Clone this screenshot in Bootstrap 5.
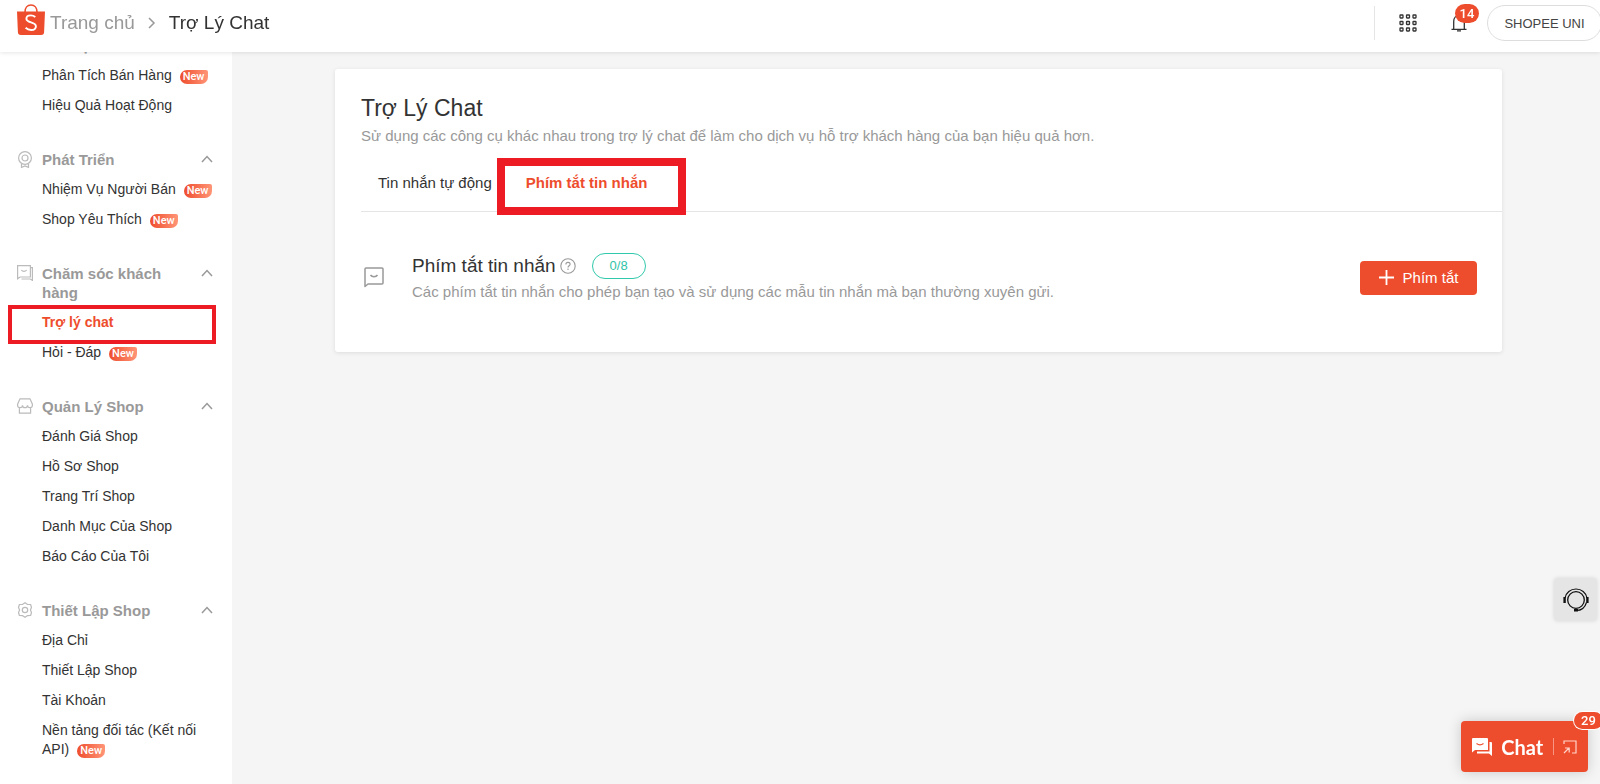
<!DOCTYPE html>
<html lang="vi">
<head>
<meta charset="utf-8">
<meta name="viewport" content="width=device-width, initial-scale=1">
<title>Trợ Lý Chat</title>
<link href="https://cdn.jsdelivr.net/npm/bootstrap@5.3.0/dist/css/bootstrap.min.css" rel="stylesheet">
<style>
:root { --brand: #ee4d2d; --mark-red: #ed1c24; --ink: #333; --soft: #999; }
body { font-family: "Liberation Sans", Arial, sans-serif; font-size: 14px; line-height: 19px; color: var(--ink); background: #f5f5f5; overflow-x: hidden; }
a { color: inherit; text-decoration: none; }
svg { display: block; flex: none; fill: none; }

.topbar { height: 52px; padding: 0 0 6px 17px; background: #fff; box-shadow: 0 1px 4px rgba(0,0,0,.1); }
.crumbs { font-size: 19px; line-height: 24px; }
.crumbs .home { color: var(--soft); }
.crumbs .logo { margin: -8px 5px 0 0; }
.crumbs .sep { margin: 0 13px; }
.tools { height: 36px; }
.tools .rule { width: 1px; height: 34px; background: #e5e5e5; margin-right: 24px; }
.tools .apps { margin-right: 6px; }
.plain { border: 0; padding: 0; background: none; color: var(--ink); }
.count { background: var(--brand); color: #fff; border-radius: 10px; font: 500 13px/19px Roboto, sans-serif; text-align: center; position: absolute; }
.bell .count { left: 4px; top: -10px; width: 24px; }
.account { height: 36px; width: 115px; border: 1px solid #ddd; border-radius: 18px; background: #fff; font-size: 13px; color: #444; margin-right: -2px; padding: 0; }

.side { width: 232px; min-height: 100vh; padding: 36px 16px 0 17px; background: #fff; flex: none; }
.group { margin-bottom: 35px; }
.group-head { font-size: 15px; font-weight: 700; color: var(--soft); gap: 9px; width: 100%; text-align: left; }
.group-head svg { margin-top: 1px; stroke: #bbb; }
.group-head .caret { stroke: #999; margin: 3px 3px 0 0; }
.group ul { padding-left: 25px; margin: 0; }
.group li { margin-top: 11px; position: relative; }
.new { display: inline-block; width: 28px; height: 14px; margin-left: 4px; border-radius: 7px 2px 7px 7px; background: linear-gradient(90deg, #ee4d2d, #ff9577); color: #fff; font: 500 11px/14px Roboto, sans-serif; text-align: center; vertical-align: 0; }
.active-text { color: var(--brand); font-weight: 700; }
.frame { position: absolute; pointer-events: none; border: solid var(--mark-red); }
.frame-side { border-width: 4px; inset: -8px 0 -12px -34px; }
.frame-tab { border-width: 8px; inset: -3px -22px -4px -12px; }

main { padding: 69px 98px 40px 103px; min-width: 0; }
.panel { background: #fff; border-radius: 3px; box-shadow: 0 1px 4px rgba(0,0,0,.1); padding: 25px 0 50px 26px; }
h1 { font-size: 23px; line-height: 28px; font-weight: 400; margin: 0; }
h2 { font-size: 19px; line-height: 24px; font-weight: 400; margin: 0; }
.desc { color: var(--soft); font-size: 15px; line-height: 20px; margin: 0; }
.tabs { border-bottom: 1px solid #e5e5e5; margin-top: 15px; font-size: 15px; line-height: 20px; }
.tabs a { display: block; padding: 12px 17px 18px; }
.tool-row { padding: 41px 25px 0 3px; }
.tool-row .desc { margin-top: 3px; }
.quota { border: 1px solid #30c9ab; color: #2fc3a8; border-radius: 13px; font-size: 13px; line-height: 24px; width: 54px; text-align: center; }
.add { background: var(--brand); color: #fff; border: 0; border-radius: 4px; height: 34px; width: 117px; font-size: 15px; padding: 0; gap: 9px; }

.support { position: fixed; right: 3px; bottom: 163px; width: 43px; height: 43px; border: 0; border-radius: 4px; background: #e5e5e5; box-shadow: 0 0 4px rgba(0,0,0,.12); padding: 0; }
.chat { position: fixed; right: 12px; bottom: 12px; width: 127px; height: 51px; border: 0; border-radius: 4px; background: var(--brand); color: #fff; box-shadow: 0 0 14px rgba(0,0,0,.18); font: 700 20px/24px Lato, sans-serif; padding: 0 11px; }
.chat .bar { width: 1px; height: 17px; background: #f79683; }
.chat .count { right: -15px; top: -9px; width: 29px; line-height: 17px; box-shadow: 0 0 0 1px #fff; }
</style>
</head>
<body>
<header class="topbar fixed-top d-flex align-items-center justify-content-between">
  <nav class="crumbs d-flex align-items-center" aria-label="breadcrumb">
    <a href="#" class="logo" aria-label="Shopee"><svg width="28" height="31" viewBox="0 0 28 31">
      <path d="M8 8c0-4 2.300-7 6-7s6 3 6 7" stroke="#ee4d2d" stroke-width="1.600"/>
      <path d="M0 7.500h28l-.900 20.500a3 3 0 0 1-3 3H3.900a3 3 0 0 1-3-3z" fill="#ee4d2d"/>
      <path d="M18.300 13.100c-1.300-1.100-2.700-1.700-4.500-1.700-2.600 0-4.400 1.300-4.400 3.300 0 4.600 9.500 2.600 9.500 7.500 0 2.300-2 3.800-4.800 3.800-2.200 0-4-.8-5.500-2.200" stroke="#fff" stroke-width="1.900"/></svg></a>
    <a href="#" class="home">Trang chủ</a>
    <svg class="sep" width="8" height="12" viewBox="0 0 8 12"><path d="M1 1l5 5-5 5" stroke="#999" stroke-width="1.500"/></svg>
    <span>Trợ Lý Chat</span>
  </nav>
  <div class="tools d-flex align-items-center">
    <span class="rule"></span>
    <button class="plain apps" aria-label="Ứng dụng"><svg width="18" height="18" viewBox="0 0 18 18" stroke="#333" stroke-width="1.300"><g id="gr"><rect x="1" y="1" width="3" height="3" rx=".5"/><rect x="7.500" y="1" width="3" height="3" rx=".5"/><rect x="14" y="1" width="3" height="3" rx=".5"/></g><use href="#gr" y="6.500"/><use href="#gr" y="13"/></svg></button>
    <button class="plain bell position-relative ms-4 me-3" aria-label="Thông báo"><svg class="ms-1" width="16" height="18" viewBox="0 0 16 18" stroke="#333" stroke-width="1.300"><path d="M.5 15.300h15M2.700 15V7.500C2.700 4 5 1.500 8 1.500s5.300 2.500 5.300 6V15M6 16.800h4"/></svg><span class="count ms-1">14</span></button>
    <button class="account ms-1">SHOPEE UNI</button>
  </div>
</header>

<div class="d-flex">
  <aside class="side">
    <section class="group">
      <button class="plain group-head d-flex align-items-start"><svg width="16" height="16"></svg><span>Dữ Liệu</span></button>
      <ul class="list-unstyled">
        <li><a href="#">Phân Tích Bán Hàng <span class="new">New</span></a></li>
        <li><a href="#">Hiệu Quả Hoạt Động</a></li>
      </ul>
    </section>
    <section class="group">
      <button class="plain group-head d-flex align-items-start"><svg width="16" height="17" viewBox="0 0 16 17" stroke-width="1.200"><circle cx="8" cy="7" r="6.400"/><circle cx="8" cy="7" r="3"/><path d="M4.500 12.500v3.900L8 15l3.500 1.400v-3.900"/></svg><span class="flex-grow-1">Phát Triển</span><svg class="caret" width="12" height="12" viewBox="0 0 12 12"><path d="M1 9l5-5.500L11 9" stroke-width="1.500"/></svg></button>
      <ul class="list-unstyled">
        <li><a href="#">Nhiệm Vụ Người Bán <span class="new">New</span></a></li>
        <li><a href="#">Shop Yêu Thích <span class="new">New</span></a></li>
      </ul>
    </section>
    <section class="group">
      <button class="plain group-head d-flex align-items-start"><svg width="16" height="16" viewBox="0 0 16 16" stroke-width="1.200"><path d="M.6.600h12.800v11.400H3L.600 13.800zM4.300 5c1.300 1.800 4 1.800 5.400 0M13.600 2.600h1.800v12.800l-2-1.400H4.500"/></svg><span class="flex-grow-1">Chăm sóc khách hàng</span><svg class="caret" width="12" height="12" viewBox="0 0 12 12"><path d="M1 9l5-5.500L11 9" stroke-width="1.500"/></svg></button>
      <ul class="list-unstyled">
        <li><a href="#" class="active-text">Trợ lý chat</a><span class="frame frame-side"></span></li>
        <li><a href="#">Hỏi - Đáp <span class="new">New</span></a></li>
      </ul>
    </section>
    <section class="group">
      <button class="plain group-head d-flex align-items-start"><svg width="16" height="16" viewBox="0 0 16 16" stroke-width="1.200"><path d="M3 .8h10l2.400 5.400v1a2.400 2.400 0 0 1-4.900 0 2.500 2.500 0 0 1-5 0 2.400 2.400 0 0 1-4.900 0v-1zM2.400 9.600v5.600h11.200V9.600"/></svg><span class="flex-grow-1">Quản Lý Shop</span><svg class="caret" width="12" height="12" viewBox="0 0 12 12"><path d="M1 9l5-5.500L11 9" stroke-width="1.500"/></svg></button>
      <ul class="list-unstyled">
        <li><a href="#">Đánh Giá Shop</a></li>
        <li><a href="#">Hồ Sơ Shop</a></li>
        <li><a href="#">Trang Trí Shop</a></li>
        <li><a href="#">Danh Mục Của Shop</a></li>
        <li><a href="#">Báo Cáo Của Tôi</a></li>
      </ul>
    </section>
    <section class="group">
      <button class="plain group-head d-flex align-items-start"><svg width="16" height="16" viewBox="0 0 16 16" stroke-width="1.200"><path d="M5.700 2.300 8 .7l2.300 1.600 3.300.2.900 3-1.100 2.500 1.100 2.500-.9 3-3.300.2L8 15.300l-2.300-1.600-3.300-.2-.9-3L2.600 8 1.500 5.500l.9-3z" stroke-linejoin="round"/><circle cx="8" cy="8" r="2.700"/></svg><span class="flex-grow-1">Thiết Lập Shop</span><svg class="caret" width="12" height="12" viewBox="0 0 12 12"><path d="M1 9l5-5.500L11 9" stroke-width="1.500"/></svg></button>
      <ul class="list-unstyled">
        <li><a href="#">Địa Chỉ</a></li>
        <li><a href="#">Thiết Lập Shop</a></li>
        <li><a href="#">Tài Khoản</a></li>
        <li><a href="#">Nền tảng đối tác (Kết nối API) <span class="new">New</span></a></li>
      </ul>
    </section>
  </aside>

  <main class="flex-grow-1">
    <div class="panel">
      <h1>Trợ Lý Chat</h1>
      <p class="desc mt-1">Sử dụng các công cụ khác nhau trong trợ lý chat để làm cho dịch vụ hỗ trợ khách hàng của bạn hiệu quả hơn.</p>
      <nav class="tabs d-flex">
        <a href="#">Tin nhắn tự động</a>
        <a href="#" class="active-text position-relative">Phím tắt tin nhắn<span class="frame frame-tab"></span></a>
      </nav>
      <div class="tool-row d-flex align-items-center">
        <svg width="20" height="21" viewBox="0 0 20 21" stroke="#999" stroke-width="1.500"><path d="M1 19.500V2a1 1 0 0 1 1-1h16a1 1 0 0 1 1 1v14a1 1 0 0 1-1 1H4zM6.500 8c1.500 2.300 5.500 2.300 7 0" stroke-linejoin="round"/></svg>
        <div class="flex-grow-1 ps-4 ms-1">
          <div class="d-flex align-items-center">
            <h2>Phím tắt tin nhắn</h2>
            <svg class="ms-1" width="16" height="16" viewBox="0 0 16 16" stroke="#999" stroke-width="1.100"><circle cx="8" cy="8" r="7.200"/><path d="M5.900 6.400c0-1.200.9-2 2.100-2s2.100.8 2.100 1.900c0 1.400-2.100 1.500-2.100 3.200M8 10.600v1.300"/></svg>
            <span class="quota ms-3">0/8</span>
          </div>
          <p class="desc">Các phím tắt tin nhắn cho phép bạn tạo và sử dụng các mẫu tin nhắn mà bạn thường xuyên gửi.</p>
        </div>
        <button class="add d-flex align-items-center justify-content-center"><svg width="15" height="15" viewBox="0 0 15 15"><path d="M7.500 0v15M0 7.500h15" stroke="#fff" stroke-width="1.800"/></svg>Phím tắt</button>
      </div>
    </div>
  </main>
</div>

<button class="support d-flex align-items-center justify-content-center" aria-label="Hỗ trợ"><svg width="26" height="24" viewBox="0 0 26 24" stroke="#111"><circle cx="13" cy="12" r="8.300" stroke-width="1.300"/><path d="M2 10C3 4.500 7.500 1 13 1s10 3.500 11 9M23.500 14.500c-1.500 4.800-5 8-10 8" stroke-width="1.200"/><path d="M1.600 9v6M24.400 9v6M11 22.300h4" stroke-width="2.400"/></svg></button>

<button class="chat d-flex align-items-center justify-content-between">
  <svg width="20" height="18" viewBox="0 0 20 18"><path d="M1 0h14a1 1 0 0 1 1 1v11H3l-3 2.500V1a1 1 0 0 1 1-1z" fill="#fff"/><path d="M17.500 4H19a1 1 0 0 1 1 1v13l-3-2.500H5v-2h12.500z" fill="#fff"/><path d="M4.500 5.500c2 1.500 5 1.500 7 0" stroke="#ee4d2d" stroke-width="1.200"/></svg>
  <span>Chat</span>
  <span class="bar"></span>
  <svg width="14" height="14" viewBox="0 0 14 14" stroke="#ffd5cb" stroke-width="1.200"><path d="M1 4V1h12v12H9M1 13l5-5M2 8h4.200v4.500"/></svg>
  <span class="count">29</span>
</button>
<script src="https://cdn.jsdelivr.net/npm/bootstrap@5.3.0/dist/js/bootstrap.bundle.min.js"></script>
</body>
</html>
